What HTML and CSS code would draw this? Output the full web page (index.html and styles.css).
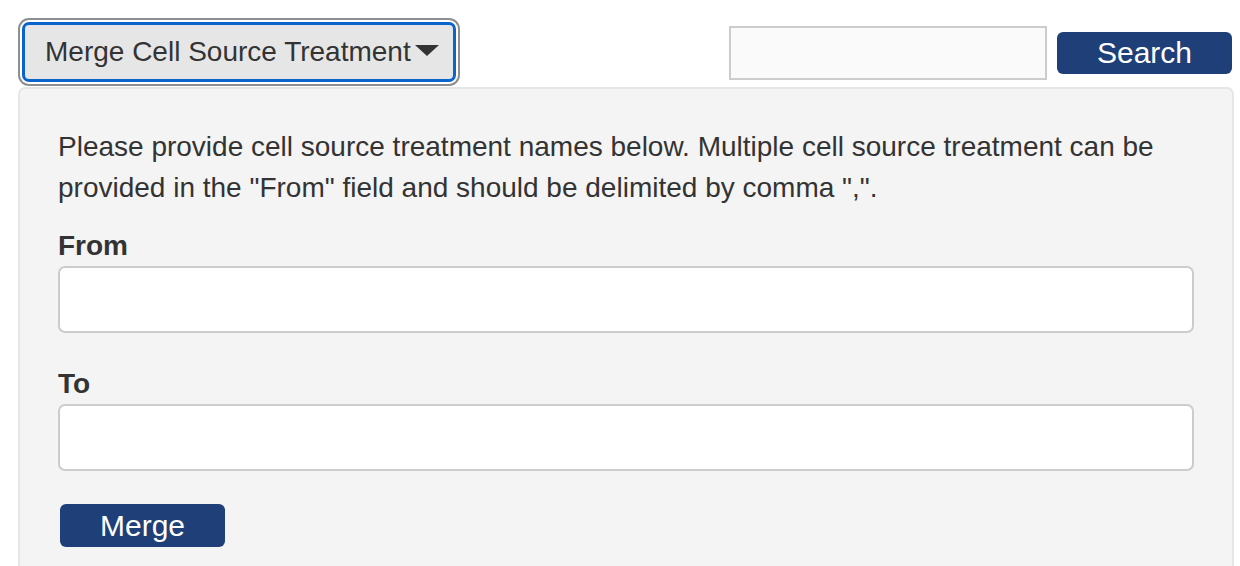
FILE: index.html
```html
<!DOCTYPE html>
<html>
<head>
<meta charset="utf-8">
<link rel="stylesheet" href="styles.css">
</head>
<body>
<div class="page">
  <div class="topbar">
    <button class="dropdown" type="button">Merge Cell Source Treatment<span class="caret"></span></button>
    <div class="search">
      <input class="search-input" type="text">
      <button class="btn search-btn" type="button">Search</button>
    </div>
  </div>
  <div class="panel">
    <p class="intro">Please provide cell source treatment names below. Multiple cell source treatment can be provided in the "From" field and should be delimited by comma ",".</p>
    <label class="label">From</label>
    <input class="field" type="text">
    <label class="label label-to">To</label>
    <input class="field" type="text">
    <button class="btn merge-btn" type="button">Merge</button>
  </div>
</div>
</body>
</html>
```
FILE: styles.css
```css
html, body {
  margin: 0;
  padding: 0;
  background: #fff;
  font-family: "Liberation Sans", Arial, Helvetica, sans-serif;
  color: #333;
}
.page {
  padding: 18px 6px 0 18px;
}
.topbar {
  display: flex;
  justify-content: space-between;
  align-items: center;
  height: 67px;
}
.dropdown {
  margin-left: 4px;
  width: 434px;
  height: 60px;
  box-sizing: border-box;
  border: 3px solid #0b63ce;
  border-radius: 7px;
  box-shadow: 0 0 0 2px #fff, 0 0 0 4px #8e8e8e;
  background: #e6e6e6;
  font-family: inherit;
  font-size: 28px;
  color: #333;
  text-align: left;
  padding: 0 0 0 20px;
  display: flex;
  align-items: center;
}
.caret {
  display: inline-block;
  width: 0;
  height: 0;
  margin-left: 4px;
  border-left: 12px solid transparent;
  border-right: 12px solid transparent;
  border-top: 11px solid #333;
  position: relative;
  top: -1px;
}
.search {
  display: flex;
  align-items: center;
  gap: 10px;
  margin-top: 3px;
  margin-right: 2px;
}
.search-input {
  width: 318px;
  height: 54px;
  box-sizing: border-box;
  border: 2px solid #ccc;
  background: #fafafa;
  margin: 0;
}
.btn {
  background: #1e3f78;
  color: #fff;
  border: none;
  border-radius: 6px;
  font-family: inherit;
  font-size: 30px;
  padding: 0;
  margin: 0;
}
.search-btn {
  width: 175px;
  height: 42px;
}
.panel {
  margin-top: 2px;
  background: #f4f4f4;
  border: 2px solid #e6e6e6;
  border-bottom: none;
  border-radius: 7px 7px 0 0;
  padding: 37px 38px 19px 38px;
  display: flex;
  flex-direction: column;
  align-items: stretch;
}
.intro {
  margin: 0;
  font-size: 28px;
  line-height: 41px;
}
.label {
  display: block;
  font-weight: bold;
  font-size: 28px;
  line-height: 40px;
  margin-top: 18px;
}
.label-to {
  margin-top: 31px;
}
.field {
  height: 67px;
  box-sizing: border-box;
  border: 2px solid #ccc;
  border-radius: 7px;
  background: #fff;
  margin: 0;
}
.merge-btn {
  align-self: flex-start;
  margin: 33px 0 0 2px;
  width: 165px;
  height: 43px;
}
```
